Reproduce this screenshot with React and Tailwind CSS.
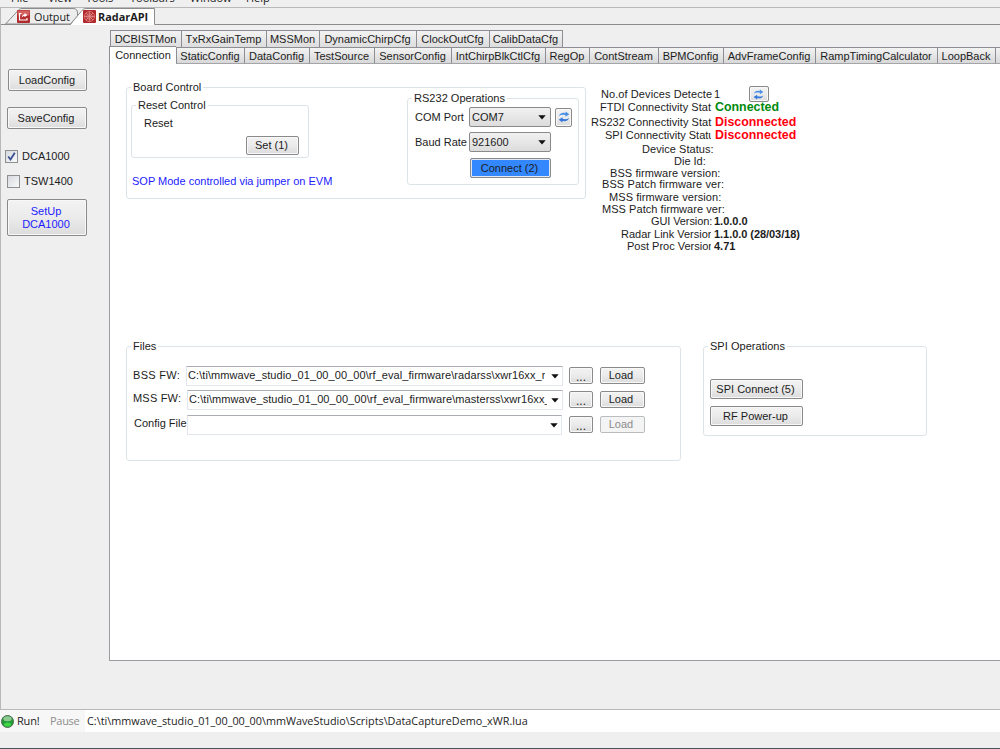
import clsx from "clsx";

const menus = [
  { label: "File", cls: "w-[37px]" },
  { label: "View", cls: "w-[38px]" },
  { label: "Tools", cls: "w-[44px]" },
  { label: "Toolbars", cls: "w-[60px]" },
  { label: "Window", cls: "w-[56px]" },
  { label: "Help", cls: "w-[40px]" },
];

const topTabs = [
  { label: "DCBISTMon", cls: "w-[71px]" },
  { label: "TxRxGainTemp", cls: "w-[85px]" },
  { label: "MSSMon", cls: "w-[53px]" },
  { label: "DynamicChirpCfg", cls: "w-[97px]" },
  { label: "ClockOutCfg", cls: "w-[73px]" },
  { label: "CalibDataCfg", cls: "w-[74px] border-r" },
];

const bottomTabs = [
  { label: "StaticConfig", cls: "w-[68px]" },
  { label: "DataConfig", cls: "w-[65px]" },
  { label: "TestSource", cls: "w-[65px]" },
  { label: "SensorConfig", cls: "w-[77px]" },
  { label: "IntChirpBlkCtlCfg", cls: "w-[94px]" },
  { label: "RegOp", cls: "w-[44px]" },
  { label: "ContStream", cls: "w-[69px]" },
  { label: "BPMConfig", cls: "w-[65px]" },
  { label: "AdvFrameConfig", cls: "w-[92px]" },
  { label: "RampTimingCalculator", cls: "w-[122px]" },
  { label: "LoopBack", cls: "w-[58px]" },
  { label: "", cls: "w-[10px]" },
];

const statusRows = [
  { label: "No.of Devices Detecte", pad: "pl-[11px] w-[124px] tracking-[0.08px]", value: "1" },
  {
    label: "FTDI Connectivity Stat",
    pad: "mt-[2px] pl-[10px] w-[124px] tracking-[0.05px]",
    value: "Connected",
    color: "pl-px text-[#008a0e] font-bold text-[12.4px]",
  },
  {
    label: "RS232 Connectivity Stat",
    pad: "mt-[4px] pl-[1px] w-[124px] tracking-[0.05px]",
    value: "Disconnected",
    color: "pl-px text-[#ff000c] font-bold text-[12.4px]",
  },
  {
    label: "SPI Connectivity Statu",
    pad: "mt-[2px] pl-[15px] w-[121px] mr-[3px]",
    value: "Disconnected",
    color: "pl-px text-[#ff000c] font-bold text-[12.4px]",
  },
  { label: "Device Status:", pad: "mt-[3px] pl-[52px] tracking-[0.05px]" },
  { label: "Die Id:", pad: "mt-px pl-[84px]" },
  { label: "BSS firmware version:", pad: "mt-px pl-[20px] tracking-[0.08px]" },
  { label: "BSS Patch firmware ver:", pad: "pl-[12px] tracking-[0.1px]" },
  { label: "MSS firmware version:", pad: "mt-[2px] pl-[19px] tracking-[0.08px]" },
  { label: "MSS Patch firmware ver:", pad: "mt-px pl-[12px] tracking-[0.05px]" },
  {
    label: "GUI Version:",
    pad: "mt-px pl-[61px] w-[124px] tracking-[-0.1px]",
    value: "1.0.0.0",
    color: "font-bold",
  },
  {
    label: "Radar Link Version",
    pad: "mt-[2px] pl-[31px] w-[121px] mr-[3px]",
    value: "1.1.0.0 (28/03/18)",
    color: "font-bold tracking-[-0.05px]",
  },
  {
    label: "Post Proc Version",
    pad: "mt-px pl-[37px] w-[121px] mr-[3px]",
    value: "4.71",
    color: "font-bold",
  },
];

const buttonTones = {
  normal: "border-[#8a8a8a] bg-linear-to-b from-[#f3f3f3] via-[#ebebeb] to-[#dcdcdc] shadow-[inset_0_0_0_1px_#f8f8f8]",
  active: "border-[#8a8a8a] bg-[#3388ff] shadow-[inset_0_0_0_1px_#dfe9f5]",
  disabled: "border-[#b9bdc0] bg-[#f4f4f4] text-[#8b8b8b]",
};

const Button = ({ tone = "normal", className, children }) => (
  <button
    className={clsx(
      "flex shrink-0 items-center justify-center rounded-[2px] border text-center whitespace-nowrap",
      buttonTones[tone],
      className
    )}
  >
    {children}
  </button>
);

const Caret = () => (
  <svg width="8" height="5" viewBox="0 0 8 5" className="shrink-0">
    <path d="M0.3 0.3H7.7L4 4.6Z" fill="#111" />
  </svg>
);

const RefreshIcon = ({ className }) => (
  <svg width="12" height="12" viewBox="0 0 12 12" className={className}>
    <path d="M1 5C1.5 2.5 4.5 1 7.5 2.2V0.5L11.3 3.3L7.5 5.8V4.2C5 3.4 3 3.6 1 5Z" fill="#4a90e6" />
    <path d="M11 7C10.5 9.5 7.5 11 4.5 9.8V11.5L0.7 8.7L4.5 6.2V7.8C7 8.6 9 8.4 11 7Z" fill="#3478dc" />
  </svg>
);

const Group = ({ title, className, children }) => (
  <fieldset
    className={clsx("min-w-0 shrink-0 rounded-[3px] border border-[#dde4e8]", className)}
  >
    <legend className="ml-[4px] h-3 px-[2px] leading-3 tracking-[0.03px]">{title}</legend>
    {children}
  </fieldset>
);

const Select = ({ value }) => (
  <div className="flex h-5 w-[82px] items-center justify-between rounded-[2px] border border-[#8a8a8a] bg-linear-to-b from-[#f1f1f1] to-[#dcdcdc] pr-[4px] pl-[2px]">
    <span>{value}</span>
    <Caret />
  </div>
);

const FileRow = ({ label, labelCls, value, boxCls, className, disabled }) => (
  <div className={clsx("flex h-5 items-start", className)}>
    <span className={clsx("shrink-0 leading-5 whitespace-nowrap", labelCls)}>{label}</span>
    <div
      className={clsx(
        "flex h-5 shrink-0 items-center border border-[#e2e6ee] border-t-[#abadb3] bg-white pr-[3px] pl-px",
        boxCls
      )}
    >
      <span className="mr-auto max-w-[358px] overflow-hidden pb-[2px] tracking-[0.07px] whitespace-nowrap">
        {value}
      </span>
      <Caret />
    </div>
    <Button className="mt-px ml-[5px] h-[17px] w-6">
      <span className="pt-[3px] text-[12px] leading-none">...</span>
    </Button>
    <Button
      tone={disabled ? "disabled" : "normal"}
      className="mt-px ml-[7px] h-[17px] w-[45px] pr-[3px]"
    >
      Load
    </Button>
  </div>
);

const Check = ({ checked }) => (
  <span className="flex size-[13px] items-center justify-center border border-[#8e8f8f] bg-linear-to-br from-[#d5d9df] to-[#fafafa]">
    {checked && (
      <svg width="9" height="9" viewBox="0 0 9 9">
        <path d="M1.2 4.5L3.5 7.5L7.8 0.8" fill="none" stroke="#3b4f91" strokeWidth="1.8" />
      </svg>
    )}
  </span>
);

const WindowTabs = () => (
  <div className="flex h-[17px] items-end border-b border-[#8c8c8c] pl-[4px] font-['Open_Sans',sans-serif] text-[11px]">
    <div className="relative h-4 w-[73px]">
      <svg width="76" height="16" className="absolute inset-0">
        <path d="M0.5 16L14 1.5Q15 0.5 17 0.5H68Q72.5 0.5 72.5 5V9L66 16Z" fill="#ededed" stroke="#8c8c8c" />
      </svg>
      <div className="relative flex h-4 items-center pl-[12px]">
        <svg width="13" height="13" viewBox="0 0 13 13">
          <rect width="13" height="13" rx="1" fill="#b22a2d" />
          <rect x="0.5" y="0.5" width="12" height="5" rx="1" fill="#d4605f" />
          <path d="M4.5 3.5H2.5V10H10V8" fill="none" stroke="#fff" strokeWidth="1.2" />
          <path d="M4.5 8C5 5.5 6 4.6 7.5 4.5V3L10.5 5L7.5 7.2V6C6.5 6 5.5 6.5 4.5 8Z" fill="#fff" />
        </svg>
        <span className="ml-[4px] pt-[2px] text-[10.8px] leading-4">Output</span>
      </div>
    </div>
    <div className="relative -mb-px h-[17px] w-[85px]">
      <svg width="85" height="17" className="absolute -left-[8px] w-[86px]">
        <path d="M0.5 17L12 2.5Q13.5 0.5 16 0.5H84.5V17Z" fill="#fff" />
        <path d="M0 16.5L12 2.5Q13.5 0.5 16 0.5H84.5V16.5" fill="none" stroke="#8c8c8c" />
      </svg>
      <div className="relative flex h-4 items-center pl-[5px] font-bold">
        <svg width="13" height="13" viewBox="0 0 13 13">
          <rect width="13" height="13" rx="1" fill="#b3282c" />
          <g fill="none" stroke="#e59a97" strokeWidth="0.7">
            <circle cx="6.5" cy="6.5" r="5" />
            <circle cx="6.5" cy="6.5" r="2.8" />
            <path d="M6.5 1.5V11.5M1.5 6.5H11.5M3 3L10 10M10 3L3 10" />
          </g>
        </svg>
        <span className="ml-[2px] pt-[2px] text-[10.9px] leading-4">RadarAPI</span>
      </div>
    </div>
  </div>
);

const Sidebar = () => (
  <aside className="flex w-[108px] shrink-0 flex-col pt-[44px] pl-[6px]">
    <Button className="ml-px h-[22px] w-[79px] pr-px">LoadConfig</Button>
    <Button className="mt-4 h-[22px] w-[80px] pr-[2px]">SaveConfig</Button>
    <div className="mt-[21px] -ml-[2px] flex h-[13px] items-center gap-[4px] leading-none">
      <Check checked />
      DCA1000
    </div>
    <div className="mt-3 flex h-[13px] items-center gap-[4px] leading-none">
      <Check />
      TSW1400
    </div>
    <Button className="mt-[11px] h-[37px] w-[80px] pr-[2px] leading-[13px] text-[#1c1cff]">
      SetUp
      <br />
      DCA1000
    </Button>
  </aside>
);

const ConnectionPage = () => (
  <section className="h-[597px] border-b border-l border-[#9a9ca2] bg-white">
    <div className="flex h-[275px] pt-[17px] pl-4">
      <Group title="Board Control" className="h-[118px] w-[460px]">
        <div className="flex">
          <div className="w-[280px] pt-[6px] pl-[4px]">
            <Group title="Reset Control" className="h-[59px] w-[178px]">
              <p className="mt-[6px] pl-3 leading-3">Reset</p>
              <Button className="mt-[7px] ml-[114px] h-[19px] w-[53px] pr-[2px]">Set (1)</Button>
            </Group>
            <p className="mt-[17px] pl-px leading-3 whitespace-nowrap text-[#1c1cff]">
              SOP Mode controlled via jumper on EVM
            </p>
          </div>
          <Group title="RS232 Operations" className="-mt-px h-[93px] w-[172px]">
            <div className="mt-[3px] flex h-5 items-center pl-[7px]">
              <span className="w-[54px]">COM Port</span>
              <Select value="COM7" />
              <Button className="ml-[4px] h-[19px] w-[17px]">
                <RefreshIcon />
              </Button>
            </div>
            <div className="mt-[5px] flex h-5 items-center pl-[7px]">
              <span className="w-[54px] whitespace-nowrap">Baud Rate</span>
              <Select value="921600" />
            </div>
            <Button tone="active" className="mt-[6px] ml-[62px] h-5 w-[81px] pr-[2px]">
              Connect (2)
            </Button>
          </Group>
        </div>
      </Group>

      <div className="ml-[4px] pt-2">
        {statusRows.map((row) => (
          <div key={row.label} className="flex">
            <span
              className={clsx(
                "h-[11px] shrink-0 leading-[11px] whitespace-nowrap [overflow-x:clip]",
                row.pad
              )}
            >
              {row.label}
            </span>
            {row.value && (
              <span
                className={clsx("h-[11px] self-end leading-[11px] whitespace-nowrap", row.color)}
              >
                {row.value}
              </span>
            )}
          </div>
        ))}
      </div>
      <Button className="mt-[5px] -ml-[51px] h-4 w-5">
        <RefreshIcon className="h-[11px] w-[13px]" />
      </Button>
    </div>

    <div className="flex items-start pt-px pl-4">
      <Group title="Files" className="h-[121px] w-[555px]">
        <FileRow
          className="mt-[14px]"
          label="BSS FW:"
          labelCls="pl-[6px] w-[59px] -mt-px tracking-[0.3px]"
          boxCls="w-[377px] mr-px"
          value="C:\ti\mmwave_studio_01_00_00_00\rf_eval_firmware\radarss\xwr16xx_r"
        />
        <FileRow
          className="mt-[4px]"
          label="MSS FW:"
          labelCls="pl-[6px] w-[60px] -mt-[2px] tracking-[0.2px]"
          boxCls="w-[376px] mr-px"
          value="C:\ti\mmwave_studio_01_00_00_00\rf_eval_firmware\masterss\xwr16xx_"
        />
        <FileRow
          className="mt-[5px]"
          label="Config File"
          labelCls="pl-[7px] w-[60px] -mt-[2px]"
          boxCls="w-[375px] mr-[2px]"
          disabled
        />
      </Group>
      <Group title="SPI Operations" className="ml-[22px] h-[96px] w-[224px]">
        <Button className="mt-[27px] ml-[6px] h-[20px] w-[93px] pr-[2px]">SPI Connect (5)</Button>
        <Button className="mt-[7px] ml-[6px] h-[20px] w-[93px] pr-[2px]">RF Power-up</Button>
      </Group>
    </div>
  </section>
);

const StatusBar = () => (
  <footer className="font-['Open_Sans',sans-serif] text-[11px]">
    <div className="flex h-[22px] items-center bg-white">
      <div className="flex h-full w-[85px] items-center bg-[#f7f7f7] pl-px">
        <svg width="13" height="13" viewBox="0 0 13 13">
          <circle cx="6.5" cy="6.5" r="6" fill="#239b35" stroke="#4d6b52" />
          <ellipse cx="6.5" cy="3.8" rx="4.2" ry="2.5" fill="#8fca94" />
          <ellipse cx="6.5" cy="9.5" rx="3.5" ry="2" fill="#3fd548" />
        </svg>
        <span className="ml-[3px] w-[33px] tracking-[-0.2px]">Run!</span>
        <span className="tracking-[-0.3px] text-[#8d8d8d]">Pause</span>
      </div>
      <span className="pl-[2px] text-[10.83px] whitespace-nowrap">
        C:\ti\mmwave_studio_01_00_00_00\mmWaveStudio\Scripts\DataCaptureDemo_xWR.lua
      </span>
    </div>
    <div className="h-4 bg-[#efefef]" />
    <div className="h-px bg-[#4e5162]" />
  </footer>
);

const App = () => {
  return (
    <div className="flex h-[749px] w-[1000px] flex-col overflow-hidden bg-[#efefef] font-['Liberation_Sans',Arial,sans-serif] text-[11px] text-[#1c1c1c]">
      {/* Menu bar */}
      <nav className="flex h-[7px] shrink-0 items-end overflow-hidden pb-[2px] pl-[11px] font-['Open_Sans',sans-serif]">
        {menus.map((menu) => (
          <span key={menu.label} className={clsx("-mb-px h-4 shrink-0 leading-4", menu.cls)}>
            {menu.label}
          </span>
        ))}
      </nav>

      <div className="flex h-[703px] shrink-0 flex-col border-t border-b border-l border-[#b9b9b9]">
        <WindowTabs />
        <div className="flex min-h-0 flex-1">
          <Sidebar />
          <main className="min-w-0 flex-1 overflow-hidden pt-[5px]">
            <div className="flex h-[17px] pl-px">
              {topTabs.map((tab) => (
                <div
                  key={tab.label}
                  className={clsx(
                    "shrink-0 border-t border-l border-[#8c8e94] bg-linear-to-b from-[#f3f3f3] to-[#dddddd] pr-px text-center leading-[17px] whitespace-nowrap",
                    tab.cls
                  )}
                >
                  {tab.label}
                </div>
              ))}
            </div>
            <div className="flex h-[17px]">
              <div className="relative -mt-px h-[18px] w-[67px] shrink-0 border-t border-l border-[#8c8e94] bg-white text-center leading-[17px]">
                Connection
              </div>
              {bottomTabs.map((tab) => (
                <div
                  key={tab.label}
                  className={clsx(
                    "shrink-0 border-t border-b border-l border-[#8c8e94] border-b-[#a4a5a9] bg-linear-to-b from-[#f3f3f3] to-[#d8d8d8] pr-px text-center leading-[17px] whitespace-nowrap",
                    tab.cls
                  )}
                >
                  {tab.label}
                </div>
              ))}
            </div>
            <ConnectionPage />
          </main>
        </div>
      </div>
      <StatusBar />
    </div>
  );
};

export default App;
